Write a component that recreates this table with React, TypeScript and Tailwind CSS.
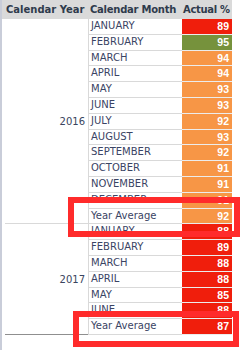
const RED = 'bg-[#f01e0c]';
const GREEN = 'bg-[#76923c]';
const ORANGE = 'bg-[#f79646]';

type Row = { month: string; value: number; color: string };

const groups: { year: string; rows: Row[] }[] = [
  {
    year: '2016',
    rows: [
      { month: 'JANUARY', value: 89, color: RED },
      { month: 'FEBRUARY', value: 95, color: GREEN },
      { month: 'MARCH', value: 94, color: ORANGE },
      { month: 'APRIL', value: 94, color: ORANGE },
      { month: 'MAY', value: 93, color: ORANGE },
      { month: 'JUNE', value: 93, color: ORANGE },
      { month: 'JULY', value: 92, color: ORANGE },
      { month: 'AUGUST', value: 93, color: ORANGE },
      { month: 'SEPTEMBER', value: 92, color: ORANGE },
      { month: 'OCTOBER', value: 91, color: ORANGE },
      { month: 'NOVEMBER', value: 91, color: ORANGE },
      { month: 'DECEMBER', value: 91, color: ORANGE },
      { month: 'Year Average', value: 92, color: ORANGE },
    ],
  },
  {
    year: '2017',
    rows: [
      { month: 'JANUARY', value: 88, color: RED },
      { month: 'FEBRUARY', value: 89, color: RED },
      { month: 'MARCH', value: 88, color: RED },
      { month: 'APRIL', value: 88, color: RED },
      { month: 'MAY', value: 85, color: RED },
      { month: 'JUNE', value: 88, color: RED },
      { month: 'Year Average', value: 87, color: RED },
    ],
  },
];

const font = "font-['DejaVu_Sans',sans-serif]";

export default function App() {
  return (
    <div className={`relative w-[248px] h-[350px] overflow-hidden bg-white flex ${font}`}>
      {/* left frame strip */}
      <div className="w-[2px] h-full bg-[#c9cdd9]" />

      <div className="flex flex-col">
        {/* header */}
        <div className="flex h-[19px] w-[230px] bg-[#dadada] text-[10px] font-bold text-[#2f3b4c] leading-[19px]">
          <div className="w-[86px] pl-[4px] whitespace-nowrap">Calendar Year</div>
          <div className="w-[94px] pl-[2px] whitespace-nowrap tracking-[-0.25px]">Calendar Month</div>
          <div className="w-[50px] pl-[1px] whitespace-nowrap tracking-[-0.3px]">Actual %</div>
        </div>

        {groups.map((g, gi) => (
          <div key={g.year} className="flex">
            <div
              className={`ml-[3px] w-[83px] flex items-center justify-end pr-[3px] text-[10px] text-[#3a4560] border-b ${
                gi === groups.length - 1 ? 'border-[#8f8f8f]' : 'border-[#d9d9d9]'
              }`}
            >
              {g.year}
            </div>
            <div className="flex flex-col">
              {g.rows.map((r) => (
                <div key={r.month} className="flex h-[15.8px]">
                  <div className="w-[94px] border-l border-b border-[#d9d9d9] pl-[2px] text-[10px] leading-[14px] text-[#3a4464] whitespace-nowrap">
                    {r.month}
                  </div>
                  <div
                    className={`w-[50px] ${r.color} border-b-[1.5px] border-[#ececec] pr-[3px] text-right text-white font-bold text-[10.5px] leading-[14px] font-['Liberation_Sans',sans-serif]`}
                  >
                    {r.value}
                  </div>
                </div>
              ))}
            </div>
          </div>
        ))}
      </div>

      {/* highlight annotations */}
      <div className="absolute left-[68px] top-[197px] w-[172px] h-[40px] border-[6px] border-[#ff2b2b]" />
      <div className="absolute left-[73px] top-[311px] w-[166px] h-[36px] border-[6px] border-[#ff2b2b]" />
    </div>
  );
}
